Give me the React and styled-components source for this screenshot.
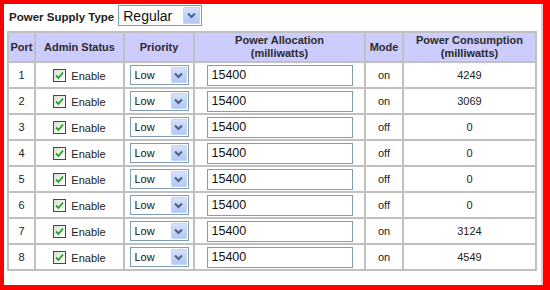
import React from "react";
import styled, { createGlobalStyle } from "styled-components";

const Global = createGlobalStyle`
  html, body { margin: 0; padding: 0; background: #fff; }
  body { font-family: "Liberation Sans", Arial, sans-serif; }
`;

const Frame = styled.div`
  width: 550px;
  height: 290px;
  box-sizing: border-box;
  border-style: solid;
  border-color: #ff0000;
  border-width: 4px 7px 5px 4px;
  background: #fff;
  box-shadow: inset -2px 0 0 #d4d4d4;
  overflow: hidden;
`;

const TopBar = styled.div`
  display: flex;
  align-items: center;
  gap: 4px;
  height: 23px;
  padding-left: 5px;
`;

const Label = styled.span`
  font-size: 11.5px;
  font-weight: bold;
  color: #222;
  margin-top: 3px;
`;

const SelectBox = styled.div`
  display: flex;
  align-items: center;
  justify-content: space-between;
  box-sizing: border-box;
  width: ${(p) => p.$w}px;
  height: ${(p) => p.$h}px;
  border: 1px solid #7f9db9;
  background: #fff;
  padding: 1px 1px 1px ${(p) => p.$pad}px;
  font-size: ${(p) => p.$fs}px;
  color: #111;
`;

const ArrowBtn = styled.span`
  display: flex;
  align-items: center;
  justify-content: center;
  box-sizing: border-box;
  width: ${(p) => p.$s}px;
  height: 100%;
  background: linear-gradient(180deg, #d7e2fc 0%, #c0d2f8 60%, #b3c7f3 100%);
  border: 1px solid #c3d3fd;
  border-radius: 1px;
`;

const Table = styled.table`
  margin: 4px 0 0 3px;
  width: 530px;
  table-layout: fixed;
  border-collapse: separate;
  border-spacing: 2px;
  background: #c0c0c0;
`;

const Th = styled.th`
  height: 28px;
  padding: 0;
  background: #ccccff;
  font-size: 11px;
  font-weight: bold;
  color: #2a2a2a;
  text-align: center;
  vertical-align: middle;
  line-height: 13px;
`;

const Td = styled.td`
  height: 24px;
  padding: 0;
  background: #fff;
  font-size: 11px;
  color: #222;
  text-align: center;
  vertical-align: middle;
`;

const CellFlex = styled.div`
  display: flex;
  align-items: center;
  justify-content: center;
  gap: ${(p) => p.$gap || 0}px;
`;

const Check = styled.span`
  display: inline-flex;
  align-items: center;
  justify-content: center;
  box-sizing: border-box;
  width: 13px;
  height: 13px;
  border: 1px solid #1c5180;
  background: linear-gradient(135deg, #dcdcd7 0%, #f4f4f1 60%, #ffffff 100%);
`;

const EnableText = styled.span`
  font-size: 11px;
  color: #222;
  margin-top: 2px;
`;

const TextInput = styled.input`
  box-sizing: border-box;
  width: 146px;
  height: 21px;
  margin: 0;
  border: 1px solid #7f9db9;
  padding: 0 4px;
  font-family: "Liberation Sans", Arial, sans-serif;
  font-size: 12.5px;
  color: #111;
  background: #fff;
  outline: none;
`;

const Chevron = () => (
  <svg width="9" height="7" viewBox="0 0 9 7">
    <polyline points="1,1.5 4.5,5 8,1.5" fill="none" stroke="#4d6185" strokeWidth="2" />
  </svg>
);

const CheckMark = () => (
  <svg width="9" height="9" viewBox="0 0 9 9">
    <polyline points="1,4.5 3.5,7 8,1.5" fill="none" stroke="#21a121" strokeWidth="1.8" />
  </svg>
);

const Dropdown = ({ value, w, h, fs, pad, arrow }) => (
  <SelectBox $w={w} $h={h} $fs={fs} $pad={pad}>
    <span>{value}</span>
    <ArrowBtn $s={arrow}>
      <Chevron />
    </ArrowBtn>
  </SelectBox>
);

const rows = [
  { port: 1, mode: "on", cons: "4249" },
  { port: 2, mode: "on", cons: "3069" },
  { port: 3, mode: "off", cons: "0" },
  { port: 4, mode: "off", cons: "0" },
  { port: 5, mode: "off", cons: "0" },
  { port: 6, mode: "off", cons: "0" },
  { port: 7, mode: "on", cons: "3124" },
  { port: 8, mode: "on", cons: "4549" },
];

export default function App() {
  return (
    <>
      <Global />
      <Frame>
        <TopBar>
          <Label>Power Supply Type</Label>
          <Dropdown value="Regular" w={84} h={21} fs={14} pad={4} arrow={17} />
        </TopBar>
        <Table>
          <colgroup>
            <col style={{ width: 25 }} />
            <col style={{ width: 87 }} />
            <col style={{ width: 68 }} />
            <col style={{ width: 169 }} />
            <col style={{ width: 36 }} />
            <col style={{ width: 131 }} />
          </colgroup>
          <thead>
            <tr>
              <Th>Port</Th>
              <Th>Admin Status</Th>
              <Th>Priority</Th>
              <Th>
                Power Allocation
                <br />
                (milliwatts)
              </Th>
              <Th>Mode</Th>
              <Th>
                Power Consumption
                <br />
                (milliwatts)
              </Th>
            </tr>
          </thead>
          <tbody>
            {rows.map((r) => (
              <tr key={r.port}>
                <Td>{r.port}</Td>
                <Td>
                  <CellFlex $gap={5}>
                    <Check>
                      <CheckMark />
                    </Check>
                    <EnableText>Enable</EnableText>
                  </CellFlex>
                </Td>
                <Td>
                  <CellFlex>
                    <Dropdown value="Low" w={59} h={20} fs={11} pad={4} arrow={16} />
                  </CellFlex>
                </Td>
                <Td>
                  <CellFlex>
                    <TextInput readOnly value="15400" />
                  </CellFlex>
                </Td>
                <Td>{r.mode}</Td>
                <Td>{r.cons}</Td>
              </tr>
            ))}
          </tbody>
        </Table>
      </Frame>
    </>
  );
}
